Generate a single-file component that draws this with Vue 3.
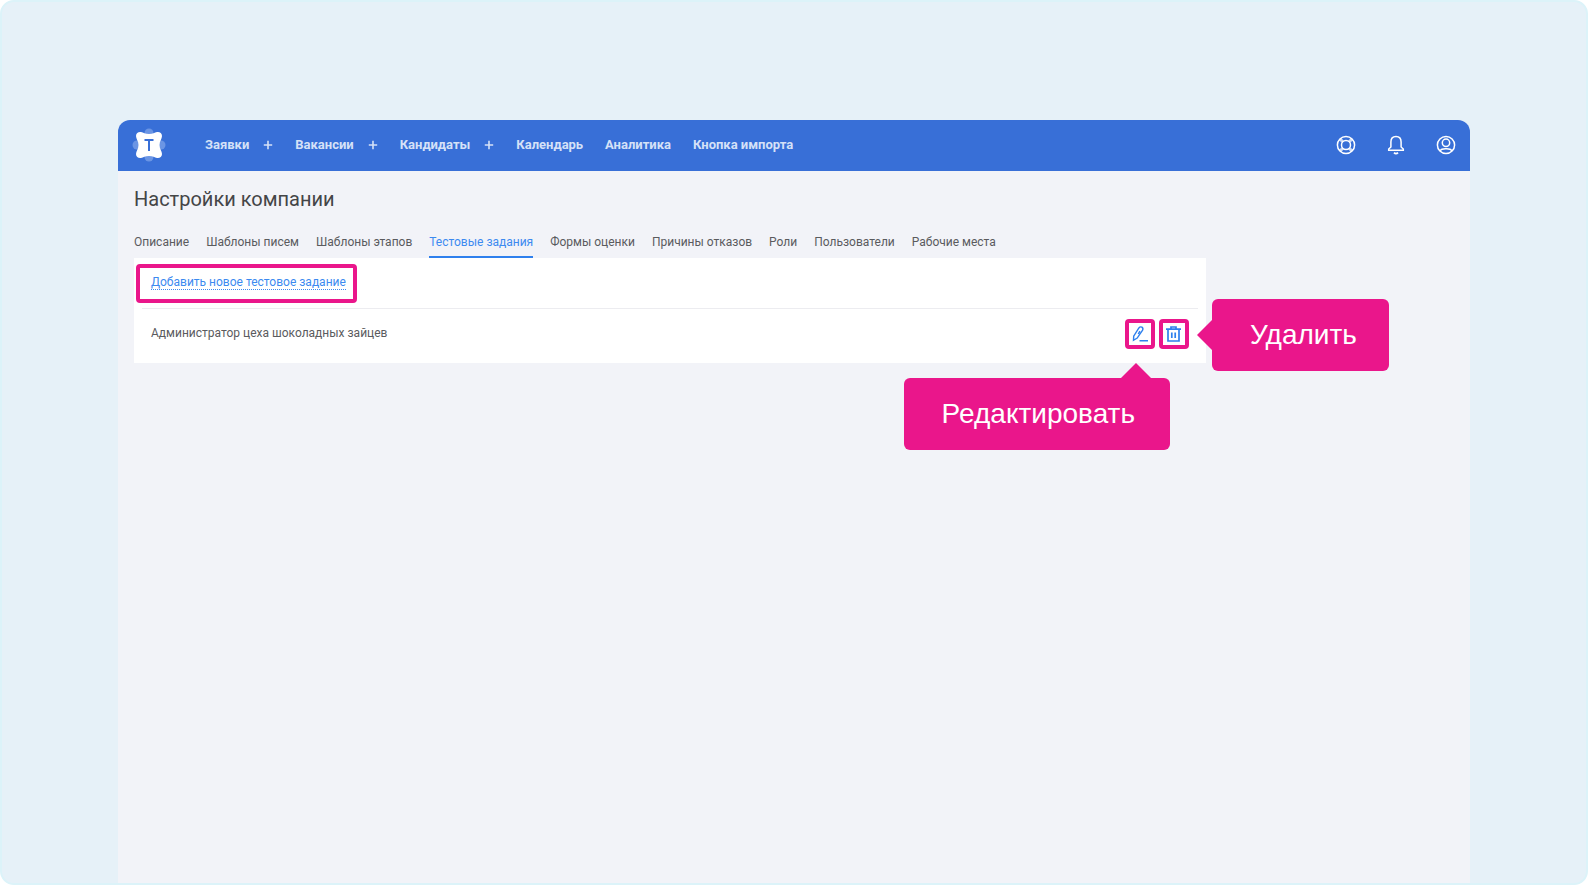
<script setup>
const sections = [
  { title: 'Заявки', creatable: true },
  { title: 'Вакансии', creatable: true },
  { title: 'Кандидаты', creatable: true },
  { title: 'Календарь' },
  { title: 'Аналитика' },
  { title: 'Кнопка импорта' },
]

const tabs = [
  'Описание',
  'Шаблоны писем',
  'Шаблоны этапов',
  'Тестовые задания',
  'Формы оценки',
  'Причины отказов',
  'Роли',
  'Пользователи',
  'Рабочие места',
]
const activeTab = 'Тестовые задания'

const tasks = ['Администратор цеха шоколадных зайцев']
</script>

<template>
  <div class="stage">
    <div class="window">
      <header class="topbar">
        <a class="logo" href="#" aria-label="Главная">
          <svg viewBox="0 0 34 34" width="34" height="34">
            <g fill="#6b95e4">
              <circle cx="17" cy="5" r="4.500" />
              <circle cx="17" cy="29" r="4.500" />
              <circle cx="5" cy="17" r="4.500" />
              <circle cx="29" cy="17" r="4.500" />
            </g>
            <path
              fill="#fff"
              d="M4 8C4 5 6.500 3.500 9 4C11.500 4.500 13 6 17 6C21 6 22.500 4.500 25 4C27.500 3.500 30 5 30 8C30 11 27.500 13 27.500 17C27.500 21 30 23 30 26C30 29 27.500 30.500 25 30C22.500 29.500 21 28 17 28C13 28 11.500 29.500 9 30C6.500 30.500 4 29 4 26C4 23 6.500 21 6.500 17C6.500 13 4 11 4 8Z"
            />
            <path d="M12.500 12H21.500M17 12V23" fill="none" stroke="#386fd7" stroke-width="2" />
          </svg>
        </a>
        <nav class="nav">
          <div v-for="s in sections" :key="s.title" class="nav-item">
            <a href="#">{{ s.title }}</a>
            <button v-if="s.creatable" class="plus" type="button" aria-label="Создать">
              <svg viewBox="0 0 10 10" width="10" height="10">
                <path d="M5 .8V9.200M.8 5H9.200" stroke="currentColor" stroke-width="1.600" />
              </svg>
            </button>
          </div>
        </nav>
        <div class="tools">
          <button type="button" aria-label="Помощь">
            <svg viewBox="0 0 20 20" width="20" height="20">
              <circle cx="10" cy="10" r="8.600" />
              <circle cx="10" cy="10" r="4.500" />
              <path d="M3.900 3.900L6.800 6.800M16.100 3.900L13.200 6.800M3.900 16.100L6.800 13.200M16.100 16.100L13.200 13.200" stroke-opacity=".75" stroke-width="3" />
            </svg>
          </button>
          <button type="button" aria-label="Уведомления">
            <svg viewBox="0 0 20 20" width="20" height="20">
              <path d="M2.700 15.300V14L4.900 12V7C4.900 3.500 7 1.500 10 1.500S15.100 3.500 15.100 7V12L17.300 14V15.300Z" />
              <path d="M8 17.600Q10 19.600 12 17.600" stroke-width="1.800" />
            </svg>
          </button>
          <button type="button" aria-label="Профиль">
            <svg viewBox="0 0 20 20" width="20" height="20">
              <circle cx="10" cy="10" r="8.600" />
              <circle cx="10" cy="7.800" r="3.700" />
              <path d="M3.800 15.800C5.500 13.600 7.500 13.800 10 13.800S14.500 13.600 16.200 15.800" />
            </svg>
          </button>
        </div>
      </header>

      <main class="content">
        <h1>Настройки компании</h1>
        <nav class="tabs">
          <a v-for="t in tabs" :key="t" href="#" :class="{ active: t === activeTab }">{{ t }}</a>
        </nav>
        <section class="card">
          <div class="card-head">
            <div class="mark mark-link"><a class="add" href="#">Добавить новое тестовое задание</a></div>
          </div>
          <div v-for="task in tasks" :key="task" class="task">
            <span class="task-name">{{ task }}</span>
            <div class="actions">
              <div class="spot">
                <button class="mark" type="button" aria-label="Изменить задание">
                  <svg viewBox="0 0 18 18" width="18" height="18">
                    <path d="M2.500 15.300L2.700 11.200L7.900 3Q9.200 1.300 10.900 2.200Q12.500 3.300 11.600 5.200L6.200 13.100ZM8.900 6.200L7.200 9M8.500 15.800H17" />
                  </svg>
                </button>
                <div class="callout below">Редактировать</div>
              </div>
              <div class="spot">
                <button class="mark" type="button" aria-label="Удалить задание">
                  <svg viewBox="0 0 18 18" width="18" height="18">
                    <path d="M1 4.200H16M6 3.500V2H11V3.500M3 4.500V16H14V4.500M6.800 7.500V13M10.200 7.500V13" stroke-width="1.700" />
                  </svg>
                </button>
                <div class="callout beside">Удалить</div>
              </div>
            </div>
          </div>
        </section>
      </main>
    </div>
  </div>
</template>

<style>
body {
  background: #fff;
}
</style>

<style scoped>
.stage {
  box-sizing: border-box;
  height: 100vh;
  padding: 118px 116px 0;
  display: flex;
  border: 2px solid #dcf3f9;
  border-radius: 14px;
  background: #e6f1f8;
  font-family: Roboto, "Liberation Sans", sans-serif;
  font-size: 12px;
  color: #5a5b5e;
}
.window {
  flex: 1;
  min-width: 0;
  background: #f2f3f8;
  border-radius: 12px 12px 0 0;
}
a {
  color: inherit;
  text-decoration: none;
}
button {
  padding: 0;
  border: 0;
  background: none;
  color: inherit;
  display: flex;
  align-items: center;
  justify-content: center;
}
.topbar {
  box-sizing: border-box;
  height: 51px;
  padding: 0 14px 1px;
  display: flex;
  align-items: center;
  background: #386fd7;
  border-radius: 12px 12px 0 0;
  color: #fff;
}
.logo {
  display: flex;
}
.nav {
  flex: 1;
  margin-left: 39px;
  display: flex;
  gap: 22px;
  font-size: 13px;
  font-weight: 700;
  line-height: 20px;
  color: #d5e1f7;
}
.nav-item {
  display: flex;
  align-items: center;
  gap: 14px;
}
.tools {
  display: flex;
  gap: 30px;
}
.tools svg {
  fill: none;
  stroke: #fff;
  stroke-width: 1.5;
}
.content {
  max-width: 1072px;
  padding: 16px;
}
h1 {
  margin: 0;
  font-size: 20px;
  font-weight: 400;
  line-height: 24px;
  color: #444547;
}
.tabs {
  margin-top: 20px;
  display: flex;
  gap: 17px;
}
.tabs a {
  padding: 3px 0 6px;
  line-height: 16px;
  border-bottom: 2px solid transparent;
}
.tabs .active {
  color: #3c8af0;
  border-color: #2f80ed;
}
.card {
  background: #fff;
}
.card-head {
  margin: 0 8px 0 2px;
  padding: 6px 0;
  position: relative;
}
.card-head::after {
  content: "";
  position: absolute;
  inset: auto 0 0 6px;
  height: 1px;
  background: #ececf0;
}
.mark {
  box-sizing: border-box;
  border: 4px solid #ea168b;
  border-radius: 4px;
}
.mark-link {
  width: fit-content;
  padding: 7px 7px 9px 11px;
}
.add {
  display: block;
  line-height: 14px;
  border-bottom: 1px dotted #3c8af0;
  color: #3c8af0;
}
.task {
  padding: 10px 17px 14px;
  display: flex;
  align-items: center;
  justify-content: space-between;
}
.task-name {
  padding-bottom: 2px;
}
.actions {
  display: flex;
  gap: 4px;
}
.spot {
  position: relative;
}
.spot .mark {
  width: 30px;
  height: 30px;
}
.spot svg {
  fill: none;
  stroke: #2f80ed;
  stroke-width: 1.4;
}
.callout {
  position: absolute;
  padding: 18px 35px 18px 38px;
  background: #ea168b;
  border-radius: 6px;
  color: #fff;
  font: 28px/36px "Liberation Sans", Arial, sans-serif;
}
.callout::before {
  content: "";
  position: absolute;
  background: #ea168b;
}
.below {
  top: 59px;
  right: -15px;
}
.below::before {
  width: 30px;
  height: 15px;
  top: -15px;
  right: 19px;
  clip-path: polygon(50% 0, 100% 100%, 0 100%);
}
.beside {
  left: 53px;
  top: -20px;
  padding-right: 32px;
}
.beside::before {
  width: 15px;
  height: 30px;
  left: -15px;
  top: 21px;
  clip-path: polygon(0 50%, 100% 0, 100% 100%);
}
</style>
